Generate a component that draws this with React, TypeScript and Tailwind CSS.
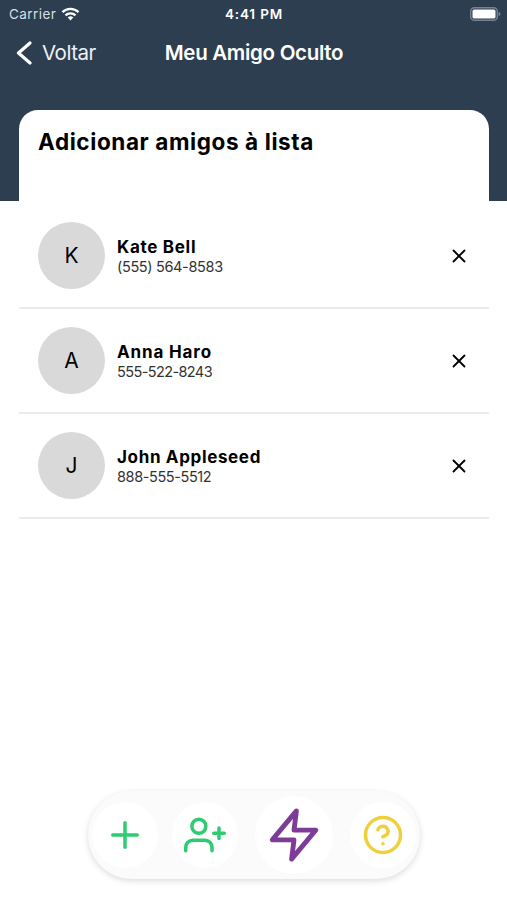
import { FiHelpCircle, FiPlus, FiUserPlus, FiX, FiZap } from 'react-icons/fi';

interface Friend {
  name: string;
  phone: string;
  nameClass: string;
  phoneClass: string;
}

const friends: Friend[] = [
  { name: 'Kate Bell', phone: '(555) 564-8583', nameClass: 'tracking-[0.7px]', phoneClass: 'tracking-[-0.35px]' },
  { name: 'Anna Haro', phone: '555-522-8243', nameClass: 'tracking-[0.85px]', phoneClass: 'tracking-[-0.6px]' },
  { name: 'John Appleseed', phone: '888-555-5512', nameClass: 'tracking-[0.65px]', phoneClass: 'tracking-[-0.4px]' },
];

function StatusBar() {
  return (
    <div className="grid h-7 grid-cols-[1fr_auto_1fr] items-center pl-[9px] pr-[6px] text-[13.5px] leading-none text-white">
      <div className="flex items-center gap-[5px]">
        <span className="pt-px tracking-[0.45px] text-[#d8dee5]">Carrier</span>
        <svg width="19" height="14" viewBox="0 0 18 14" fill="none" stroke="currentColor" strokeWidth="2.3">
          <path d="M1 5.2 A11.5 11.5 0 0 1 17 5.2" />
          <path d="M4 8.4 A7.2 7.2 0 0 1 14 8.4" />
          <path d="M9 13.4 L6.2 10.6 A4 4 0 0 1 11.8 10.6 Z" fill="currentColor" stroke="none" />
        </svg>
      </div>
      <span className="pr-[2px] pt-px text-center font-semibold tracking-[0.85px]">4:41 PM</span>
      <svg className="justify-self-end" width="31" height="14" viewBox="0 0 31 14">
        <rect x="0.7" y="0.7" width="26.6" height="12.6" rx="3.6" fill="none" stroke="#778391" strokeWidth="1.4" />
        <rect x="2.5" y="2.5" width="23" height="9" rx="1.6" fill="#fff" />
        <path d="M28.6 4.8 Q30.6 5.6 30.6 7 Q30.6 8.4 28.6 9.2 Z" fill="#778391" />
      </svg>
    </div>
  );
}

function NavBar() {
  return (
    <div className="grid h-[50px] grid-cols-[1fr_auto_1fr] items-center text-[20.5px] leading-none text-white">
      <button className="flex items-center gap-[10px] pl-4 tracking-[-0.5px] text-[#eef1f4]">
        <svg width="16" height="24" viewBox="0 0 16 24" fill="none" stroke="#fff" strokeWidth="3.2">
          <path d="M14 2 L2.5 12 L14 22" strokeLinecap="round" strokeLinejoin="round" />
        </svg>
        Voltar
      </button>
      <h1 className="pl-px font-semibold tracking-[-0.3px]">Meu Amigo Oculto</h1>
      <span />
    </div>
  );
}

function FriendRow({ friend }: { friend: Friend }) {
  return (
    <li className="ml-[19px] mr-[18px] flex h-[105px] items-center border-b-2 border-[#ebebeb] pl-[19px] pr-[19px]">
      <div className="flex size-[67px] shrink-0 items-center justify-center rounded-full bg-[#d9d9d9] text-[21px] text-black">
        {friend.name[0]}
      </div>
      <div className="ml-3 flex-1 whitespace-nowrap pt-[3px]">
        <p className={`text-[17px] font-bold leading-5 text-black ${friend.nameClass}`}>{friend.name}</p>
        <p className={`text-[14.5px] leading-5 text-[#333] ${friend.phoneClass}`}>{friend.phone}</p>
      </div>
      <button>
        <FiX className="size-[22px] text-black" />
      </button>
    </li>
  );
}

function ActionBar() {
  return (
    <nav className="mx-auto mb-[21px] flex h-[88px] w-[332px] items-center rounded-full bg-[#fbfbfb] pl-[4px] shadow-[0_2px_6px_rgba(0,0,0,0.14)]">
      <button className="flex size-[66px] items-center justify-center rounded-full bg-white text-[#2ecc71]">
        <FiPlus className="size-[42px]" />
      </button>
      <button className="ml-[14px] flex size-[66px] items-center justify-center rounded-full bg-white text-[#2ecc71]">
        <FiUserPlus className="size-[42px]" />
      </button>
      <button className="ml-[17px] flex size-[78px] items-center justify-center rounded-full bg-white text-[#7d3c98]">
        <FiZap className="size-[58px]" />
      </button>
      <button className="ml-[17px] flex size-[66px] items-center justify-center rounded-full bg-white text-[#f0cf3c]">
        <FiHelpCircle className="size-[42px]" />
      </button>
    </nav>
  );
}

export default function App() {
  return (
    <div className="flex h-[900px] w-[507px] flex-col overflow-hidden bg-white font-['Inter',sans-serif]">
      <header className="flex h-[201px] flex-col bg-[#2c3e50]">
        <StatusBar />
        <NavBar />
        <div className="ml-[19px] mr-[18px] mt-auto h-[91px] rounded-t-[19px] bg-white px-[19px] pt-[18px]">
          <h2 className="whitespace-nowrap text-[22.5px] font-bold leading-7 tracking-[0.6px] text-black">
            Adicionar amigos à lista
          </h2>
        </div>
      </header>
      <ul className="mt-[3px] flex-1">
        {friends.map((friend) => (
          <FriendRow key={friend.name} friend={friend} />
        ))}
      </ul>
      <ActionBar />
    </div>
  );
}
